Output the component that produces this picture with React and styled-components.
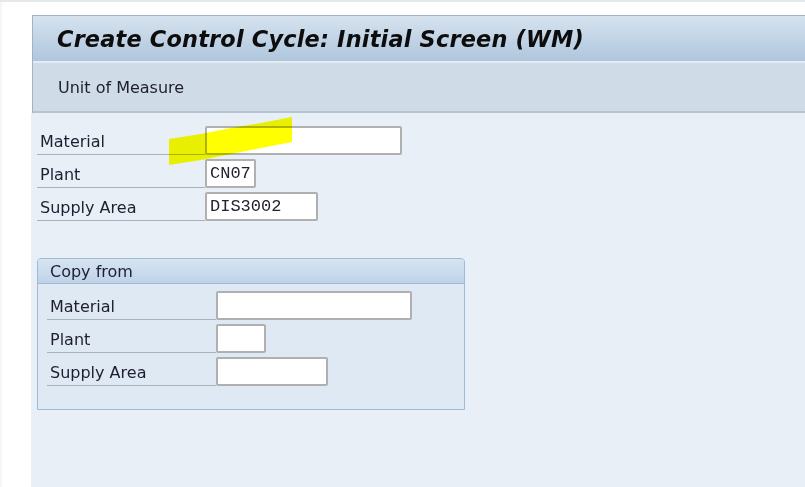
import React from 'react';
import styled, { createGlobalStyle } from 'styled-components';

const GlobalStyle = createGlobalStyle`
  html, body {
    margin: 0;
    padding: 0;
    width: 805px;
    height: 487px;
    overflow: hidden;
    background: #ffffff;
    font-family: "DejaVu Sans", Verdana, sans-serif;
  }
`;

const Screen = styled.div`
  display: flex;
  width: 805px;
  height: 487px;
  background: #ffffff;
  border-top: 2px solid #e6e9ec;
  box-sizing: border-box;
`;

const Gutter = styled.div`
  width: 32px;
  flex: none;
  background: linear-gradient(to right, #f1f2f3 0px, #ffffff 3px);
`;

const Main = styled.div`
  flex: 1;
  display: flex;
  flex-direction: column;
  padding-top: 13px;
`;

const Header = styled.div`
  border-top: 1px solid #a3b3c3;
  border-left: 1px solid #a3b3c3;
`;

const TitleBar = styled.div`
  height: 45px;
  display: flex;
  align-items: center;
  padding-left: 24px;
  background: linear-gradient(to bottom, #d6e3ef 0%, #c2d4e6 50%, #afc6dc 100%);
  border-bottom: 2px solid #e4ecf3;
`;

const Title = styled.h1`
  margin: 0;
  font-size: 22.4px;
  font-weight: 700;
  font-style: italic;
  color: #0d0d0d;
  letter-spacing: 0.2px;
`;

const Toolbar = styled.div`
  height: 48px;
  display: flex;
  align-items: center;
  padding-left: 25px;
  background: #cfdbe6;
  border-bottom: 2px solid #b4c4d3;
  font-size: 16px;
  color: #1e1e30;
`;

const Content = styled.div`
  position: relative;
  flex: 1;
  margin-left: -1px;
  background: #e8eff7;
  padding: 13px 0 0 6px;
`;

const Rows = styled.div`
  display: flex;
  flex-direction: column;
  gap: 4px;
`;

const Row = styled.div`
  display: flex;
  align-items: stretch;
  height: 29px;
`;

const Label = styled.div`
  width: ${p => p.$width}px;
  box-sizing: border-box;
  padding: 0 0 3px 3px;
  display: flex;
  align-items: flex-end;
  border-bottom: 1px solid #a9b1ba;
  font-size: 16px;
  color: #1e1e30;
`;

const Field = styled.div`
  width: ${p => p.$width}px;
  box-sizing: border-box;
  height: 29px;
  border: 2px solid #b0b0b0;
  border-radius: 2px;
  background: #ffffff;
  padding: 0 3px;
  display: flex;
  align-items: center;
  font-family: "Liberation Mono", "Courier New", monospace;
  font-size: 17px;
  color: #222233;
`;

const GroupBox = styled.section`
  margin-top: 37px;
  width: 428px;
  height: 152px;
  box-sizing: border-box;
  border: 1px solid #9fbad6;
  border-radius: 4px 4px 0 0;
  background: #dee9f4;
  display: flex;
  flex-direction: column;
`;

const GroupHeader = styled.div`
  height: 25px;
  box-sizing: border-box;
  border-bottom: 1px solid #9fbad6;
  border-radius: 3px 3px 0 0;
  background: linear-gradient(to bottom, #d6e4f1, #bfd3e8);
  padding-left: 12px;
  display: flex;
  align-items: center;
  font-size: 16px;
  color: #1e1e30;
`;

const GroupBody = styled.div`
  padding: 7px 0 0 9px;
`;

const Highlight = styled.svg`
  position: absolute;
  left: 0;
  top: 0;
  width: 300px;
  height: 60px;
  mix-blend-mode: multiply;
  pointer-events: none;
`;

const mainFields = [
  { label: 'Material', width: 197, value: '' },
  { label: 'Plant', width: 51, value: 'CN07' },
  { label: 'Supply Area', width: 113, value: 'DIS3002' },
];

const copyFields = [
  { label: 'Material', width: 196 },
  { label: 'Plant', width: 50 },
  { label: 'Supply Area', width: 112 },
];

export default function App() {
  return (
    <>
      <GlobalStyle />
      <Screen>
        <Gutter />
        <Main>
          <Header>
            <TitleBar>
              <Title>Create Control Cycle: Initial Screen (WM)</Title>
            </TitleBar>
            <Toolbar>Unit of Measure</Toolbar>
          </Header>
          <Content>
            <Rows>
              {mainFields.map(f => (
                <Row key={f.label}>
                  <Label $width={168}>{f.label}</Label>
                  <Field $width={f.width}>{f.value}</Field>
                </Row>
              ))}
            </Rows>
            <GroupBox>
              <GroupHeader>Copy from</GroupHeader>
              <GroupBody>
                <Rows>
                  {copyFields.map(f => (
                    <Row key={f.label}>
                      <Label $width={169}>{f.label}</Label>
                      <Field $width={f.width} />
                    </Row>
                  ))}
                </Rows>
              </GroupBody>
            </GroupBox>
            <Highlight viewBox="0 0 300 60">
              <polygon points="138,26 170,21 200,15 230,10 261,4 261,29 230,35 200,41 170,47 138,52" fill="#ffff00" />
            </Highlight>
          </Content>
        </Main>
      </Screen>
    </>
  );
}
